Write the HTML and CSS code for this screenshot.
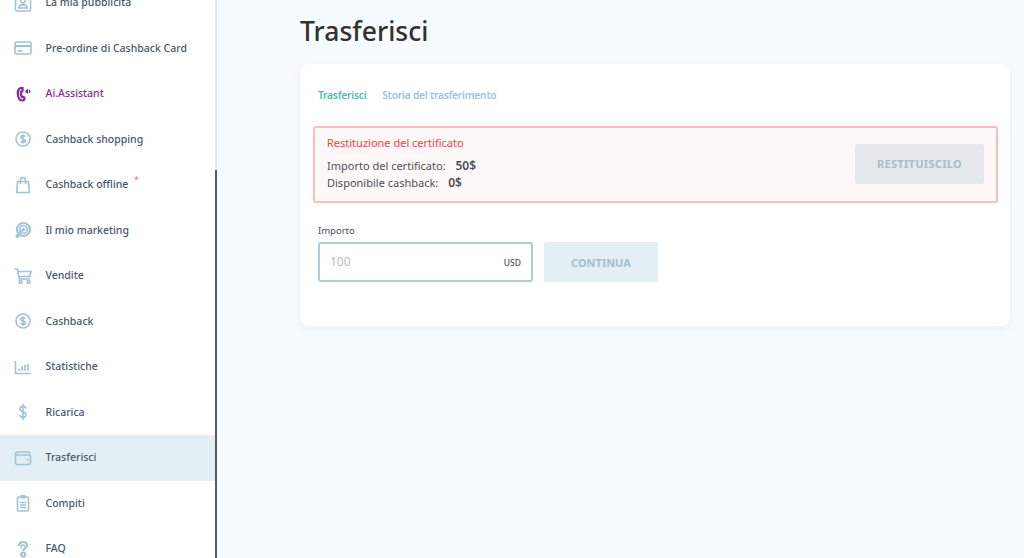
FILE: index.html
```html
<!DOCTYPE html>
<html lang="it">
<head>
    <meta charset="UTF-8">
    <title>Trasferisci</title>
    <link rel="stylesheet" href="styles.css">
</head>
<body>

    <!-- Sidebar -->
    <aside class="sidebar">
        <nav class="menu">
            <a class="menu-item">
                <svg class="menu-icon" viewBox="0 0 18 18"><rect x="1.500" y="1" width="15" height="16" rx="1.500"/><circle cx="9" cy="6.500" r="2.300"/><path d="M4.800 14c.4-2.600 2-3.400 4.200-3.400s3.800.8 4.200 3.400z"/></svg>
                <span>La mia pubblicità</span>
            </a>
            <a class="menu-item">
                <svg class="menu-icon" viewBox="0 0 18 18"><rect x="1" y="3" width="16" height="12" rx="1.500"/><path class="heavy" d="M1 7h16"/><path d="M3.500 12h5"/></svg>
                <span>Pre-ordine di Cashback Card</span>
            </a>
            <a class="menu-item menu-item-ai">
                <svg class="menu-icon" viewBox="0 0 18 18"><path class="heavy" d="M8.500 3C5.500 2.500 3.500 5 3.800 8.500c.3 4 1.800 7 4.200 7 1.500 0 2.500-.9 2.500-2 0-1.300-1.400-2-2.600-1.400C7 10.500 6.600 8.800 6.700 7c.9 0 1.800-.7 1.900-1.900z"/><path class="solid" d="M11.500 5.500l2.500-1.800v5.400l-2.500-1.800z"/><path class="solid" d="M14.800 4.800h1.400v3.200h-1.400z"/></svg>
                <span>Ai.Assistant</span>
            </a>
            <a class="menu-item">
                <svg class="menu-icon" viewBox="0 0 18 18"><circle cx="9" cy="9" r="7"/><path d="M11.300 6.700C10.800 5.700 9.900 5.500 9 5.500c-1.300 0-2.300.7-2.300 1.800 0 2.400 4.700 1 4.700 3.400 0 1.100-1.100 1.800-2.400 1.800-1 0-2-.4-2.500-1.300M9 4.200v9.600"/></svg>
                <span>Cashback shopping</span>
            </a>
            <a class="menu-item">
                <svg class="menu-icon" viewBox="0 0 18 18"><path d="M3.500 5.500h11l.7 11H2.800zM6.500 8V4a2.500 2.500 0 0 1 5 0v4"/></svg>
                <span>Cashback offline</span>
                <span class="menu-star">*</span>
            </a>
            <a class="menu-item">
                <svg class="menu-icon" viewBox="0 0 18 18"><circle class="heavy" cx="9.500" cy="8.500" r="6.500"/><circle cx="9.500" cy="8.500" r="3.800"/><circle class="solid" cx="9.500" cy="8.500" r="1.600"/><path class="heavy" d="M9.500 8.500L4 14"/><circle class="solid" cx="3.500" cy="15" r="2"/></svg>
                <span>Il mio marketing</span>
            </a>
            <a class="menu-item">
                <svg class="menu-icon" viewBox="0 0 18 18"><path d="M.5 2h2.800l2 10h10.500M4 4.500h13l-1.400 5H5"/><circle cx="6.500" cy="15" r="1.400"/><circle cx="14.500" cy="15" r="1.400"/></svg>
                <span>Vendite</span>
            </a>
            <a class="menu-item">
                <svg class="menu-icon" viewBox="0 0 18 18"><circle cx="9" cy="9" r="7"/><path d="M11.300 6.700C10.800 5.700 9.900 5.500 9 5.500c-1.300 0-2.300.7-2.300 1.800 0 2.400 4.700 1 4.700 3.400 0 1.100-1.100 1.800-2.400 1.800-1 0-2-.4-2.500-1.300M9 4.200v9.600"/></svg>
                <span>Cashback</span>
            </a>
            <a class="menu-item">
                <svg class="menu-icon" viewBox="0 0 18 18"><path d="M1.500 3v12.500h15M5 13v-2.500M8 13V8M11 13V6.500M14 13V6"/></svg>
                <span>Statistiche</span>
            </a>
            <a class="menu-item">
                <svg class="menu-icon" viewBox="0 0 18 18"><path d="M12 5.500C11.600 4 10.400 3.300 9 3.300c-1.800 0-3 1-3 2.600 0 3.500 6 2.100 6 5.700 0 1.700-1.300 2.800-3 2.800-1.500 0-2.700-.7-3.200-2.300M9 1v16"/></svg>
                <span>Ricarica</span>
            </a>
            <a class="menu-item menu-item-active">
                <svg class="menu-icon" viewBox="0 0 18 18"><path d="M3.500 3h10.500a1.500 1.500 0 0 1 1.500 1.500V6M1.500 5v8.500a2 2 0 0 0 2 2h11a2 2 0 0 0 2-2V7.500A1.500 1.500 0 0 0 15 6H3.500a2 2 0 0 1-2-1.500A2 2 0 0 1 3.500 3"/><circle class="solid" cx="13.500" cy="10.800" r="1"/></svg>
                <span>Trasferisci</span>
            </a>
            <a class="menu-item">
                <svg class="menu-icon" viewBox="0 0 18 18"><rect x="3.500" y="3" width="11" height="14" rx="1"/><rect class="solid" x="6.500" y="1" width="5" height="3.500"/><path d="M6 8.500h6M6 11h6M6 13.500h6"/></svg>
                <span>Compiti</span>
            </a>
            <a class="menu-item">
                <svg class="menu-icon" viewBox="0 0 18 18"><path class="heavy" d="M5 6c0-2.300 1.800-4 4-4s4 1.500 4 3.600c0 2.400-3.800 2.600-3.800 5.400"/><path d="M8 8C6.500 7.500 7 5 9 5c1.200 0 1.800 1 1.500 1.800"/><circle class="heavy" cx="9.200" cy="14.500" r="2"/></svg>
                <span>FAQ</span>
            </a>
        </nav>
    </aside>

    <!-- Sidebar scrollbar -->
    <div class="scrollbar"><div class="scrollbar-thumb"></div></div>

    <!-- Page content -->
    <main class="content">
        <h1>Trasferisci</h1>

        <section class="card">
            <div class="tabs">
                <a class="tab tab-active">Trasferisci</a>
                <a class="tab">Storia del trasferimento</a>
            </div>

            <div class="alert">
                <div class="alert-text">
                    <p class="alert-title">Restituzione del certificato</p>
                    <p class="alert-row">Importo del certificato: <strong>50$</strong></p>
                    <p class="alert-row">Disponibile cashback: <strong>0$</strong></p>
                </div>
                <button class="btn btn-return">RESTITUISCILO</button>
            </div>

            <label class="field-label">Importo</label>
            <div class="field-row">
                <div class="field">
                    <span class="field-value">100</span>
                    <span class="field-unit">USD</span>
                </div>
                <button class="btn btn-continue">CONTINUA</button>
            </div>
        </section>
    </main>

</body>
</html>
```

FILE: styles.css
```css
/* General Styles */
body {
    font-family: "Noto Sans", sans-serif;
    background-color: #f6fbff;
    color: #3f4a55;
    margin: 0;
    display: flex;
    height: 558px;
    overflow: hidden;
}

/* Sidebar */
.sidebar {
    width: 215px;
    flex-shrink: 0;
    background-color: #ffffff;
    overflow: hidden;
}

.menu {
    margin-top: -20px;
}

.menu-item {
    display: flex;
    align-items: center;
    height: 45.5px;
    padding-left: 14px;
    font-size: 10.5px;
    font-weight: 500;
    color: #4a5766;
}

.menu-item span {
    margin-top: -1px;
}

.menu-item-active {
    background-color: #e4eef5;
}

.menu-item-ai {
    color: #8a2a96;
}

.menu-icon {
    width: 18px;
    height: 18px;
    margin-right: 13.5px;
    flex-shrink: 0;
    fill: none;
    stroke: #a3c2d3;
    stroke-width: 1.6;
}

.menu-icon .heavy {
    stroke-width: 2.2;
}

.menu-icon .solid {
    fill: #a3c2d3;
    stroke: none;
}

.menu-item-ai .menu-icon {
    stroke: #8a2a96;
}

.menu-item-ai .menu-icon .solid {
    fill: #8a2a96;
}

.menu-item .menu-star {
    color: #ff6b78;
    font-size: 8px;
    margin: -10px 0 0 6px;
}

/* Scrollbar */
.scrollbar {
    width: 2px;
    flex-shrink: 0;
    padding-top: 170px;
    background-color: #e6e9ec;
    box-sizing: border-box;
}

.scrollbar-thumb {
    height: 100%;
    background-color: #565a5f;
}

/* Content */
.content {
    flex: 1;
    min-width: 0;
    padding: 0 14px 0 83px;
}

h1 {
    margin: 12px 0 14px;
    font-size: 26.5px;
    line-height: 38px;
    font-weight: 500;
    color: #33302e;
}

.card {
    height: 262px;
    box-sizing: border-box;
    padding: 24px 12px 0 13px;
    background-color: #ffffff;
    border-radius: 8px;
    box-shadow: 0 2px 6px rgba(190, 210, 225, 0.25);
}

/* Tabs */
.tabs {
    display: flex;
    gap: 16px;
    padding-left: 5px;
    margin-bottom: 23px;
}

.tab {
    font-size: 10.2px;
    letter-spacing: -0.2px;
    line-height: 15px;
    font-weight: 600;
    color: #a3bfcf;
}

.tab-active {
    color: #4dbfa8;
}

/* Alert */
.alert {
    display: flex;
    align-items: center;
    justify-content: space-between;
    height: 77px;
    box-sizing: border-box;
    padding: 0 12px 2px 12px;
    background-color: #fff8f8;
    border: 2px solid #ffbcbc;
    border-radius: 3px;
    margin-bottom: 21px;
}

.alert-text {
    margin-bottom: 2px;
}

.alert-title {
    margin: 0 0 6px;
    font-size: 11px;
    line-height: 17px;
    color: #ff3b45;
}

.alert-row {
    margin: 0;
    font-size: 11px;
    line-height: 17px;
    color: #4a4f55;
}

.alert-row strong {
    margin-left: 7px;
    font-size: 12px;
    font-weight: 600;
}

/* Buttons */
.btn {
    height: 40px;
    padding: 0;
    border: none;
    border-radius: 2px;
    font-family: "Noto Sans", sans-serif;
    font-size: 11px;
    font-weight: 700;
    color: #a3bfcf;
}

.btn-return {
    width: 129px;
    background-color: #e4e8ea;
    letter-spacing: 0.3px;
}

.btn-continue {
    width: 114px;
    background-color: #e4eef5;
}

/* Amount field */
.field-label {
    display: block;
    margin-left: 5px;
    margin-bottom: 5px;
    font-size: 9.5px;
    line-height: 13px;
    color: #4a4f55;
}

.field-row {
    display: flex;
    gap: 11px;
    margin-left: 5px;
}

.field {
    display: flex;
    align-items: center;
    justify-content: space-between;
    width: 215px;
    height: 40px;
    box-sizing: border-box;
    padding: 0 10px;
    border: 2px solid #b0cbd9;
    border-radius: 3px;
}

.field-value {
    margin-top: -2px;
    font-size: 12px;
    color: #b4bcc2;
}

.field-unit {
    font-size: 8.5px;
    font-weight: 500;
    color: #4a4f55;
}
```
